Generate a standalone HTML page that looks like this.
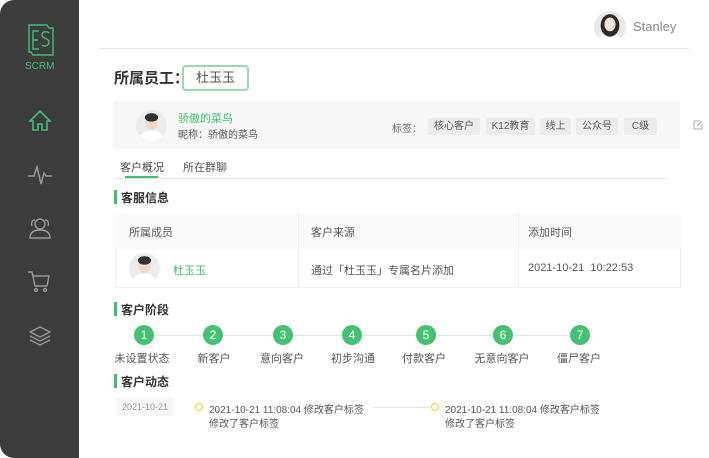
<!DOCTYPE html>
<html><head><meta charset="utf-8"><style>
*{margin:0;padding:0;box-sizing:border-box}
body{width:709px;height:458px;background:#fff;font-family:"Liberation Sans","Noto Sans CJK SC",sans-serif;position:relative;overflow:hidden;color:#333}
.a{position:absolute;white-space:nowrap}
.side{position:absolute;left:0;top:0;width:79px;height:458px;background:#3c3c3c;border-radius:14px 0 0 14px}
.av{position:absolute;border-radius:50%;background:radial-gradient(ellipse 22% 14% at 50% 24%,#333 0 95%,transparent 100%),radial-gradient(ellipse 20% 24% at 50% 42%,#efd9c9 0 95%,transparent 100%),radial-gradient(ellipse 40% 30% at 50% 95%,#fff 0 95%,transparent 100%),#ececec}
.tag{position:absolute;top:118px;height:17px;background:#ececec;border-radius:2px;font-size:10px;color:#555;text-align:center;line-height:17px}
.bar{position:absolute;width:3px;height:14px;background:#3fbf73}
.h{font-size:12px;font-weight:bold;color:#333}
.c{position:absolute;width:20px;height:20px;border-radius:50%;background:#44c173;color:#fff;font-size:12px;text-align:center;line-height:20px;top:325px}
.lb{position:absolute;top:350px;font-size:11px;color:#555;transform:translateX(-50%)}
.s{font-size:11px;color:#555}
</style></head><body>
<div class="side">
<svg class="a" style="left:28px;top:24px" width="26" height="32" viewBox="0 0 26 32" fill="none" stroke="#3fbf73" stroke-width="1.4"><path d="M1 1h18l2 3h4v27H5l-2-3H1z"/><path d="M11 7H5v18h6M5 16h5" /><path d="M21 9c-2-2-7-2-7 2s7 3 7 7-5 5-7 3"/></svg>
<div class="a" style="left:25px;top:61px;font-size:10px;color:#3fbf73">SCRM</div>
<svg class="a" style="left:28px;top:109px" width="24" height="24" viewBox="0 0 24 24" fill="none" stroke="#3fbf73" stroke-width="1.6"><path d="M2 12L12 2l10 10h-3v9h-5v-6h-4v6H5v-9z"/></svg>
<svg class="a" style="left:27px;top:164px" width="26" height="22" viewBox="0 0 26 22" fill="none" stroke="#999" stroke-width="1.5"><path d="M1 12h6l3-9 4 17 3-11 2 3h6"/></svg>
<svg class="a" style="left:27px;top:217px" width="26" height="22" viewBox="0 0 26 22" fill="none" stroke="#999" stroke-width="1.4"><circle cx="13" cy="7" r="5"/><path d="M3 21c0-6 4-8 10-8s10 2 10 8z"/><path d="M8 3C5 3 4 6 5 9M18 3c3 0 4 3 3 6"/></svg>
<svg class="a" style="left:27px;top:270px" width="24" height="24" viewBox="0 0 24 24" fill="none" stroke="#999" stroke-width="1.4"><path d="M1 2h4l3 14h12l2-10H6"/><circle cx="9" cy="20" r="1.5"/><circle cx="18" cy="20" r="1.5"/></svg>
<svg class="a" style="left:29px;top:326px" width="22" height="20" viewBox="0 0 22 20" fill="none" stroke="#999" stroke-width="1.3"><path d="M11 1l10 5-10 5-10-5z"/><path d="M1 10l10 5 10-5M1 14l10 5 10-5"/></svg>
</div>
<div class="a" style="left:594px;top:11px;width:32px;height:32px;border-radius:50%;background:radial-gradient(ellipse 18% 22% at 50% 42%,#f3e1d6 0 95%,transparent 100%),radial-gradient(ellipse 30% 36% at 50% 45%,#2a2a2a 0 95%,transparent 100%),radial-gradient(ellipse 40% 25% at 50% 95%,#fff 0 95%,transparent 100%),#e9e9e9"></div>
<div class="a" style="left:633px;top:19px;font-size:13px;color:#888">Stanley</div>
<div class="a" style="left:99px;top:48px;width:590px;height:1px;background:#e6e6e6"></div>
<div class="a" style="left:114px;top:67px;font-size:15px;font-weight:bold;color:#333">所属员工：</div>
<div class="a" style="left:182px;top:65px;width:67px;height:26px;border:2px solid #9ad9b1;border-radius:4px;font-size:13px;color:#555;text-align:center;line-height:22px">杜玉玉</div>
<div class="a" style="left:113px;top:101px;width:567px;height:48px;background:#f7f7f7"></div>
<div class="av" style="left:136px;top:110px;width:31px;height:31px"></div>
<div class="a" style="left:178px;top:110px;font-size:11px;color:#3fbf73">骄傲的菜鸟</div>
<div class="a" style="left:178px;top:126px;font-size:10px;color:#555">昵称：骄傲的菜鸟</div>
<div class="a" style="left:392px;top:120px;font-size:10px;color:#666">标签：</div>
<div class="tag" style="left:428px;width:52px">核心客户</div>
<div class="tag" style="left:486px;width:49px">K12教育</div>
<div class="tag" style="left:540px;width:31px">线上</div>
<div class="tag" style="left:576px;width:42px">公众号</div>
<div class="tag" style="left:624px;width:33px">C级</div>
<svg class="a" style="left:693px;top:120px" width="10" height="10" viewBox="0 0 10 10" fill="none" stroke="#aaa"><path d="M1 1h6v0M1 1v8h8V4M4 6l5-5"/></svg>
<div class="a" style="left:120px;top:159px;font-size:11px;color:#444">客户概况</div>
<div class="a" style="left:183px;top:159px;font-size:11px;color:#555">所在群聊</div>
<div class="a" style="left:115px;top:178px;width:551px;height:1px;background:#e3e3e3"></div>
<div class="a" style="left:125px;top:176px;width:33px;height:2px;background:#3fbf73"></div>
<div class="bar" style="left:114px;top:190px"></div><div class="a h" style="left:121px;top:189px">客服信息</div>
<div class="a" style="left:115px;top:213px;width:566px;height:75px;border:1px solid #f0f0f0"></div>
<div class="a" style="left:115px;top:213px;width:566px;height:36px;background:#fafafa"></div>
<div class="a" style="left:298px;top:213px;width:1px;height:75px;background:#eee"></div>
<div class="a" style="left:518px;top:213px;width:1px;height:75px;background:#eee"></div>
<div class="a s" style="left:129px;top:224px">所属成员</div>
<div class="a s" style="left:311px;top:224px">客户来源</div>
<div class="a s" style="left:528px;top:224px">添加时间</div>
<div class="av" style="left:129px;top:253px;width:31px;height:31px"></div>
<div class="a" style="left:173px;top:262px;font-size:11px;color:#3fbf73">杜玉玉</div>
<div class="a s" style="left:311px;top:262px">通过「杜玉玉」专属名片添加</div>
<div class="a s" style="left:528px;top:262px">2021-10-21&nbsp;&nbsp;10:22:53</div>
<div class="bar" style="left:114px;top:302px"></div><div class="a h" style="left:121px;top:301px">客户阶段</div>
<div class="a" style="left:144px;top:335px;width:436px;height:1px;background:#e5e5e5"></div>
<div class="c" style="left:134px">1</div><div class="c" style="left:203px">2</div><div class="c" style="left:273px">3</div><div class="c" style="left:342px">4</div><div class="c" style="left:416px">5</div><div class="c" style="left:493px">6</div><div class="c" style="left:570px">7</div>
<div class="lb" style="left:142px">未设置状态</div><div class="lb" style="left:214px">新客户</div><div class="lb" style="left:282px">意向客户</div><div class="lb" style="left:353px">初步沟通</div><div class="lb" style="left:424px">付款客户</div><div class="lb" style="left:502px">无意向客户</div><div class="lb" style="left:579px">僵尸客户</div>
<div class="bar" style="left:114px;top:374px"></div><div class="a h" style="left:121px;top:373px">客户动态</div>
<div class="a" style="left:116px;top:398px;width:58px;height:18px;background:#f6f6f6;font-size:9px;color:#999;text-align:center;line-height:18px">2021-10-21</div>
<div class="a" style="left:195px;top:403px;width:8px;height:8px;border:1.5px solid #f2d21a;border-radius:50%"></div>
<div class="a" style="left:209px;top:401px;font-size:10px;color:#555">2021-10-21 11:08:04 修改客户标签</div>
<div class="a" style="left:209px;top:415px;font-size:10px;color:#555">修改了客户标签</div>
<div class="a" style="left:373px;top:407px;width:57px;height:1px;background:#e3e3e3"></div>
<div class="a" style="left:431px;top:403px;width:8px;height:8px;border:1.5px solid #f2d21a;border-radius:50%"></div>
<div class="a" style="left:445px;top:401px;font-size:10px;color:#555">2021-10-21 11:08:04 修改客户标签</div>
<div class="a" style="left:445px;top:415px;font-size:10px;color:#555">修改了客户标签</div>
</body></html>
